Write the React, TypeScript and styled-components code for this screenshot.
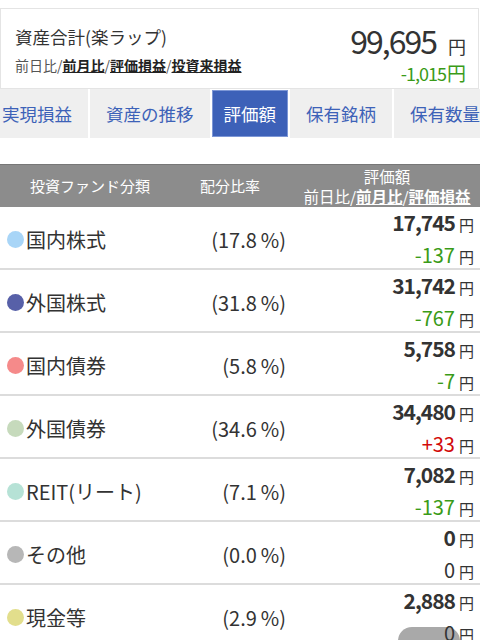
import React from 'react'
import styled, { createGlobalStyle } from 'styled-components'

const GlobalStyle = createGlobalStyle`
  html, body {
    margin: 0;
    padding: 0;
    background: #ffffff;
  }
  body {
    font-family: "Noto Sans CJK JP", "Noto Sans", sans-serif;
    color: #333333;
    overflow: hidden;
  }
`

const StyledPage = styled.div`
  position: relative;
  width: 480px;
  height: 640px;
  padding-top: 8px;
  box-sizing: border-box;
  overflow: hidden;
`

const StyledSummaryCard = styled.div`
  display: flex;
  justify-content: space-between;
  height: 81px;
  margin-right: 1px;
  padding: 14px 12px 0 14px;
  border: 1px solid #e4e4e4;
  box-sizing: border-box;
`

const StyledSummaryLeft = styled.div`
  display: flex;
  flex-direction: column;
`

const StyledSummaryTitle = styled.div`
  font-size: 17.5px;
  line-height: 28px;
  color: #333;
`

const StyledSubLinks = styled.div`
  margin-top: 4px;
  font-size: 14px;
  line-height: 20px;
  color: #555;
`

const StyledLink = styled.span`
  color: #222;
  font-weight: 700;
  text-decoration: underline;
`

const StyledSummaryRight = styled.div`
  display: flex;
  flex-direction: column;
  align-items: flex-end;
`

const StyledTotal = styled.div`
  display: flex;
  align-items: baseline;
  font-size: 32px;
  line-height: 34px;
  color: #333;
  letter-spacing: -2px;
`

const StyledYen = styled.span<{ size?: number; gap?: number }>`
  margin-left: ${props => props.gap ?? 0}px;
  font-size: ${props => props.size || 14}px;
  letter-spacing: 0;
`

const StyledDiff = styled.div<{ tone: string }>`
  display: flex;
  align-items: baseline;
  margin-top: -1px;
  font-size: 18px;
  line-height: 22px;
  letter-spacing: -1px;
  color: ${props => props.tone};
`

const StyledTabs = styled.div`
  display: flex;
  gap: 2px;
  height: 49px;
  margin-left: -14px;
  overflow: hidden;
  white-space: nowrap;
`

const StyledTab = styled.div<{ active?: boolean }>`
  flex: none;
  display: flex;
  align-items: center;
  padding: 0 ${props => (props.active ? 11 : 16)}px;
  background: ${props => (props.active ? '#3d61b8' : '#efefef')};
  color: ${props => (props.active ? '#ffffff' : '#3d62b8')};
  font-size: 17.5px;
  border: ${props => (props.active ? '1px solid #7d97d6' : 'none')};
  margin: ${props => (props.active ? '1px 0' : '0')};
  box-sizing: border-box;
`

const StyledTable = styled.div`
  margin-top: 26px;
`

const StyledHeadRow = styled.div`
  display: grid;
  grid-template-columns: 180px 100px 1fr;
  align-items: center;
  height: 43px;
  box-sizing: border-box;
  background: #8c8c8c;
  border-top: 1px solid #777;
  color: #ffffff;
  font-size: 15px;
  line-height: 20px;
`

const StyledHeadCell = styled.div`
  text-align: center;
`

const StyledHeadValue = styled.div`
  text-align: center;
  padding-left: 14px;
  font-size: 15.5px;
  line-height: 20px;
`

const StyledHeadLink = styled.span`
  font-weight: 700;
  text-decoration: underline;
`

const StyledRow = styled.div`
  display: grid;
  grid-template-columns: 200px 86px 1fr;
  align-items: center;
  height: 63px;
  border-bottom: 2px solid #dcdcdc;
  box-sizing: border-box;
`

const StyledName = styled.div`
  display: flex;
  align-items: center;
  padding-left: 7px;
  font-size: 20px;
  color: #333;
`

const StyledDot = styled.span<{ color: string }>`
  flex: none;
  width: 17px;
  height: 17px;
  margin-right: 2px;
  border-radius: 50%;
  background: ${props => props.color};
`

const StyledRatio = styled.div`
  text-align: right;
  font-size: 20px;
  color: #333;
`

const StyledValues = styled.div`
  position: relative;
  z-index: 1;
  display: flex;
  flex-direction: column;
  align-items: flex-end;
  padding-right: 6px;
`

const StyledAmount = styled.div`
  display: flex;
  align-items: baseline;
  font-size: 21px;
  line-height: 30px;
  font-weight: 700;
  letter-spacing: -1px;
  color: #333;
`

const StyledChange = styled.div<{ tone: string }>`
  display: flex;
  align-items: baseline;
  font-size: 20px;
  line-height: 30px;
  color: ${props => props.tone};
`

const StyledRowYen = styled.span`
  margin-left: 4px;
  font-size: 15px;
  font-weight: 400;
  letter-spacing: 0;
  color: #333;
`

const StyledFloating = styled.div`
  position: absolute;
  left: 398px;
  top: 627px;
  width: 62px;
  height: 30px;
  border-radius: 14px;
  background: #a9a9a9;
`

const GREEN = '#3a9b18'
const RED = '#d20a0a'

const tabs = ['実現損益', '資産の推移', '評価額', '保有銘柄', '保有数量']

const funds = [
  { id: 1, name: '国内株式', color: '#a8d5f7', ratio: '17.8', amount: '17,745', change: '-137' },
  { id: 2, name: '外国株式', color: '#5760a8', ratio: '31.8', amount: '31,742', change: '-767' },
  { id: 3, name: '国内債券', color: '#f58a8a', ratio: '5.8', amount: '5,758', change: '-7' },
  { id: 4, name: '外国債券', color: '#c6dabc', ratio: '34.6', amount: '34,480', change: '+33' },
  { id: 5, name: 'REIT(リート)', color: '#b6e2d6', ratio: '7.1', amount: '7,082', change: '-137' },
  { id: 6, name: 'その他', color: '#b7b7b7', ratio: '0.0', amount: '0', change: '0' },
  { id: 7, name: '現金等', color: '#e2de8c', ratio: '2.9', amount: '2,888', change: '0' },
]

const toneOf = (change: string) => {
  if (change.startsWith('+')) return RED
  if (change.startsWith('-')) return GREEN
  return '#333'
}

const App = () => {
  return (
    <StyledPage>
      <GlobalStyle />
      <StyledSummaryCard>
        <StyledSummaryLeft>
          <StyledSummaryTitle>資産合計(楽ラップ)</StyledSummaryTitle>
          <StyledSubLinks>
            前日比/<StyledLink>前月比</StyledLink>/<StyledLink>評価損益</StyledLink>/<StyledLink>投資来損益</StyledLink>
          </StyledSubLinks>
        </StyledSummaryLeft>
        <StyledSummaryRight>
          <StyledTotal>
            99,695<StyledYen size={18} gap={12}>円</StyledYen>
          </StyledTotal>
          <StyledDiff tone={GREEN}>
            -1,015<StyledYen size={19} gap={1}>円</StyledYen>
          </StyledDiff>
        </StyledSummaryRight>
      </StyledSummaryCard>

      <StyledTabs>
        {tabs.map((tab) => (
          <StyledTab key={tab} active={tab === '評価額'}>
            {tab}
          </StyledTab>
        ))}
      </StyledTabs>

      <StyledTable>
        <StyledHeadRow>
          <StyledHeadCell>投資ファンド分類</StyledHeadCell>
          <StyledHeadCell>配分比率</StyledHeadCell>
          <StyledHeadValue>
            評価額
            <br />
            前日比/<StyledHeadLink>前月比</StyledHeadLink>/<StyledHeadLink>評価損益</StyledHeadLink>
          </StyledHeadValue>
        </StyledHeadRow>
        {funds.map((fund) => (
          <StyledRow key={fund.id}>
            <StyledName>
              <StyledDot color={fund.color} />
              {fund.name}
            </StyledName>
            <StyledRatio>({fund.ratio}&#8201;%)</StyledRatio>
            <StyledValues>
              <StyledAmount>
                {fund.amount}
                <StyledRowYen>円</StyledRowYen>
              </StyledAmount>
              <StyledChange tone={toneOf(fund.change)}>
                {fund.change}
                <StyledRowYen>円</StyledRowYen>
              </StyledChange>
            </StyledValues>
          </StyledRow>
        ))}
      </StyledTable>
      <StyledFloating />
    </StyledPage>
  )
}

export default App
